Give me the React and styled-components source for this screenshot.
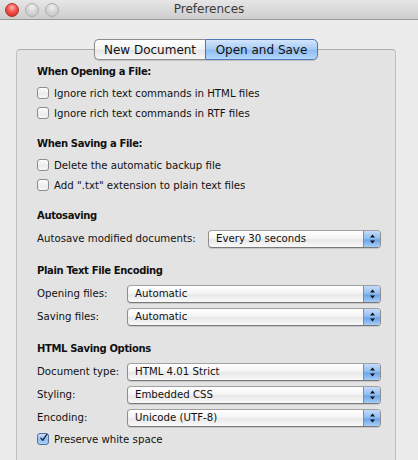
import React from "react";
import styled, { createGlobalStyle } from "styled-components";

const Global = createGlobalStyle`
  html, body { margin: 0; padding: 0; background: #ececec; }
  body { font-family: "DejaVu Sans", "Liberation Sans", sans-serif; }
`;

const Window = styled.div`
  width: 418px;
  height: 460px;
  overflow: hidden;
  background: #ececec;
  display: flex;
  flex-direction: column;
`;

const TitleBar = styled.div`
  height: 19px;
  flex: none;
  border-bottom: 1px solid #9a9a9a;
  background: linear-gradient(#e6e6e6, #cdcdcd);
  display: flex;
  align-items: center;
  position: relative;
`;

const Lights = styled.div`
  display: flex;
  gap: 6px;
  padding-left: 5px;
  position: relative;
  z-index: 1;
`;

const Light = styled.div`
  width: 14px;
  height: 14px;
  border-radius: 50%;
  box-sizing: border-box;
  border: 1px solid ${(p) => (p.$red ? "#b1322e" : "#adadad")};
  background: ${(p) =>
    p.$red
      ? "radial-gradient(circle at 50% 30%, #ffb3ad 0%, #f4514a 45%, #c4211b 100%)"
      : "radial-gradient(circle at 50% 30%, #f0f0f0 0%, #d4d4d4 50%, #c2c2c2 100%)"};
`;

const Title = styled.div`
  position: absolute;
  left: 0;
  right: 0;
  text-align: center;
  font-size: 12px;
  color: #3a3a3a;
  line-height: 19px;
`;

const Content = styled.div`
  padding: 19px 22px 0 16px;
  display: flex;
  flex-direction: column;
`;

const Tabs = styled.div`
  display: flex;
  justify-content: center;
  margin-bottom: -11px;
  position: relative;
  z-index: 1;
`;

const Tab = styled.div`
  height: 21px;
  width: ${(p) => p.$w}px;
  box-sizing: border-box;
  display: flex;
  align-items: center;
  justify-content: center;
  font-size: 12px;
  color: #111;
  white-space: nowrap;
  border: 1px solid ${(p) => (p.$active ? "#4f76b8" : "#8c8c8c")};
  border-radius: ${(p) => (p.$first ? "5px 0 0 5px" : "0 5px 5px 0")};
  ${(p) => (p.$first ? "border-right: none;" : "")}
  background: ${(p) =>
    p.$active
      ? "linear-gradient(#d3e5fb 0%, #a9cdf5 45%, #8ebdf0 55%, #b5d8fb 100%)"
      : "linear-gradient(#ffffff 0%, #f4f4f4 45%, #e6e6e6 55%, #f7f7f7 100%)"};
  box-shadow: 0 1px 1px rgba(0, 0, 0, 0.15);
`;

const Box = styled.div`
  border: 1px solid #c0c0c0;
  border-top-color: #adadad;
  border-radius: 4px;
  background: #e3e3e3;
  padding: 14px 14px 40px 20px;
  display: flex;
  flex-direction: column;
`;

const Section = styled.div`
  display: flex;
  flex-direction: column;
  margin-top: ${(p) => p.$mt || 0}px;
`;

const Heading = styled.div`
  font-weight: bold;
  font-size: 10px;
  letter-spacing: -0.35px;
  line-height: 16px;
  height: 16px;
  color: #111;
  margin-bottom: 3px;
  white-space: nowrap;
`;

const CheckRow = styled.label`
  height: 20px;
  display: flex;
  align-items: center;
  gap: 5px;
  font-size: 10.2px;
  color: #111;
  white-space: nowrap;
  margin-top: ${(p) => p.$mt || 0}px;
`;

const Box12 = styled.span`
  width: 12px;
  height: 12px;
  box-sizing: border-box;
  border-radius: 3px;
  border: 1px solid ${(p) => (p.$checked ? "#50709f" : "#8d8d8d")};
  background: ${(p) =>
    p.$checked
      ? "linear-gradient(#c8defa, #8fbdf0 60%, #aed2f8)"
      : "linear-gradient(#fdfdfd, #ececec 60%, #f7f7f7)"};
  display: flex;
  align-items: center;
  justify-content: center;
  flex: none;
  overflow: visible;
`;

const PopupRow = styled.div`
  height: 23px;
  display: flex;
  align-items: center;
  font-size: 10.2px;
  color: #111;
  white-space: nowrap;
`;

const Label = styled.div`
  width: ${(p) => p.$w}px;
  flex: none;
`;

const Popup = styled.div`
  flex: 1;
  height: 18px;
  box-sizing: border-box;
  border: 1px solid #8e8e8e;
  border-top-color: #a0a0a0;
  border-bottom-color: #7a7a7a;
  border-radius: 4px;
  display: flex;
  overflow: hidden;
  background: linear-gradient(#ffffff 0%, #f5f5f5 45%, #e8e8e8 55%, #fafafa 100%);
  box-shadow: 0 1px 0 rgba(0, 0, 0, 0.12);
`;

const PopupText = styled.div`
  flex: 1;
  padding-left: 7px;
  line-height: 16px;
  font-size: 10.2px;
`;

const Arrows = styled.div`
  width: 16px;
  flex: none;
  border-left: 1px solid #6f8fc2;
  background: linear-gradient(#c3dbf9 0%, #8dbbf0 50%, #6aa3ea 55%, #a6cdf7 100%);
  display: flex;
  align-items: center;
  justify-content: center;
`;

const Check = ({ checked }) => (
  <Box12 $checked={checked}>
    {checked && (
      <svg width="12" height="12" viewBox="0 0 12 12" style={{ marginTop: -3, marginLeft: 1 }}>
        <path d="M2.5 6.2 L5 9 L10.5 1.2" fill="none" stroke="#1b2b4a" strokeWidth="1.9" strokeLinecap="round" strokeLinejoin="round" />
      </svg>
    )}
  </Box12>
);

const Select = ({ value }) => (
  <Popup>
    <PopupText>{value}</PopupText>
    <Arrows>
      <svg width="7" height="10" viewBox="0 0 7 10">
        <path d="M3.5 0.5 L6 3.5 L1 3.5 Z" fill="#111" />
        <path d="M3.5 9.5 L6 6.5 L1 6.5 Z" fill="#111" />
      </svg>
    </Arrows>
  </Popup>
);

export default function App() {
  return (
    <>
      <Global />
      <Window>
        <TitleBar>
          <Lights>
            <Light $red />
            <Light />
            <Light />
          </Lights>
          <Title>Preferences</Title>
        </TitleBar>
        <Content>
          <Tabs>
            <Tab $first $w={111}>New Document</Tab>
            <Tab $active $w={113}>Open and Save</Tab>
          </Tabs>
          <Box>
            <Section>
              <Heading>When Opening a File:</Heading>
              <CheckRow><Check />Ignore rich text commands in HTML files</CheckRow>
              <CheckRow><Check />Ignore rich text commands in RTF files</CheckRow>
            </Section>
            <Section $mt={13}>
              <Heading>When Saving a File:</Heading>
              <CheckRow><Check />Delete the automatic backup file</CheckRow>
              <CheckRow><Check />Add ".txt" extension to plain text files</CheckRow>
            </Section>
            <Section $mt={13}>
              <Heading>Autosaving</Heading>
              <PopupRow>
                <Label $w={171}>Autosave modified documents:</Label>
                <Select value="Every 30 seconds" />
              </PopupRow>
            </Section>
            <Section $mt={13}>
              <Heading>Plain Text File Encoding</Heading>
              <PopupRow>
                <Label $w={90}>Opening files:</Label>
                <Select value="Automatic" />
              </PopupRow>
              <PopupRow>
                <Label $w={90}>Saving files:</Label>
                <Select value="Automatic" />
              </PopupRow>
            </Section>
            <Section $mt={13}>
              <Heading>HTML Saving Options</Heading>
              <PopupRow>
                <Label $w={90}>Document type:</Label>
                <Select value="HTML 4.01 Strict" />
              </PopupRow>
              <PopupRow>
                <Label $w={90}>Styling:</Label>
                <Select value="Embedded CSS" />
              </PopupRow>
              <PopupRow>
                <Label $w={90}>Encoding:</Label>
                <Select value="Unicode (UTF-8)" />
              </PopupRow>
              <CheckRow><Check checked />Preserve white space</CheckRow>
            </Section>
          </Box>
        </Content>
      </Window>
    </>
  );
}
